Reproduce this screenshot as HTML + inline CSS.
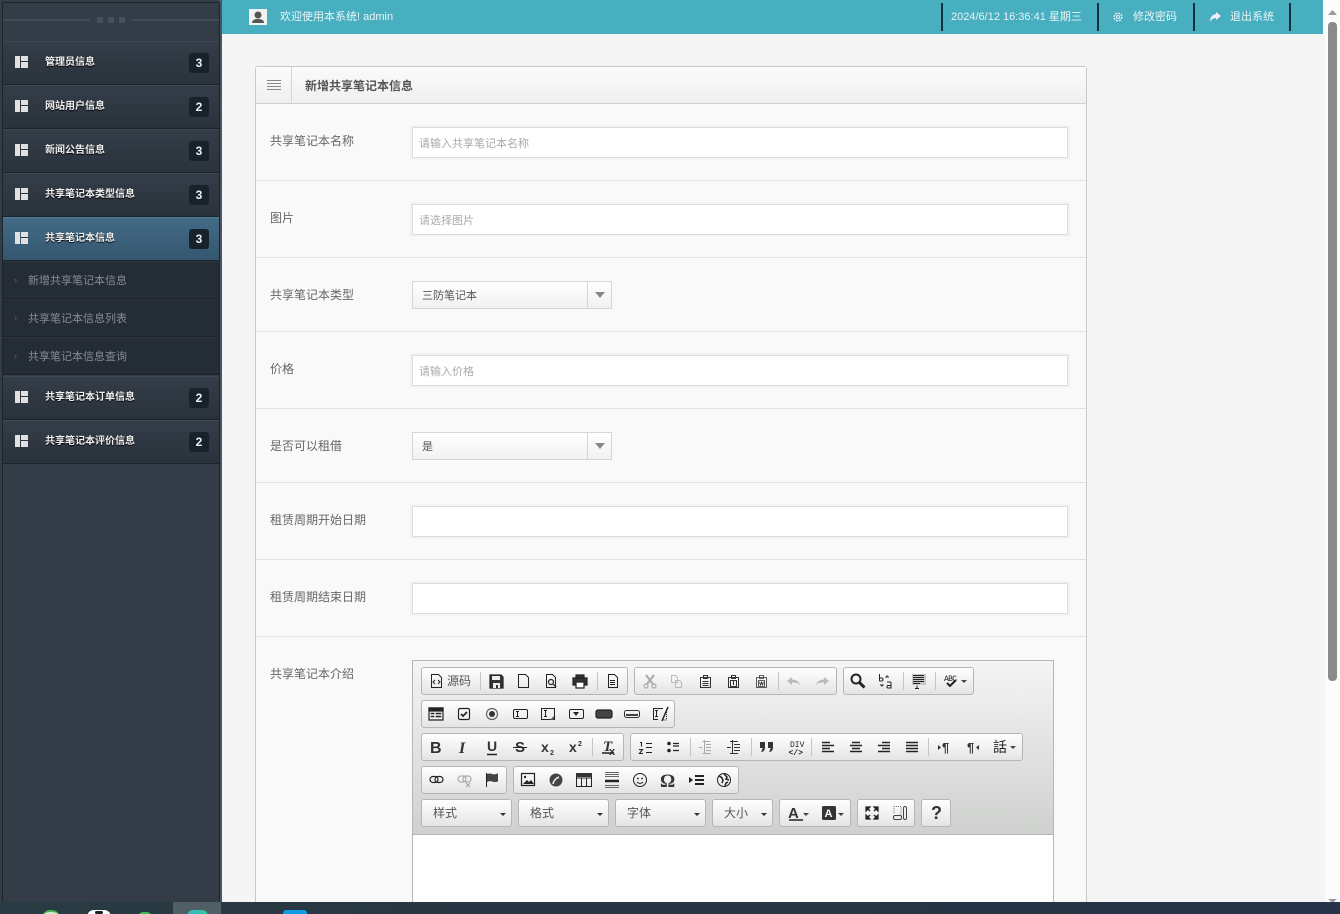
<!DOCTYPE html>
<html lang="zh-CN"><head><meta charset="utf-8"><title>新增共享笔记本信息</title>
<style>
html,body{margin:0;padding:0;width:1340px;height:914px;overflow:hidden;background:#f5f5f5;font-family:"Liberation Sans","Noto Sans CJK SC",sans-serif;font-size:12px;color:#555}
body{position:relative}
div,span{position:absolute;box-sizing:border-box;white-space:nowrap}
#side{left:0;top:0;width:222px;height:914px;background:#333c47;border-right:3px solid #4c555f}
#side .fr{left:2px;top:2px;width:218px;height:912px;border:1px solid #1c242c;border-width:1px 1px 0 1px}
.mi{left:3px;width:216px;height:44px;background:linear-gradient(#343d48,#2a323c);border-top:1px solid #3d4651;border-bottom:1px solid #1b232b}
.mi.on{background:linear-gradient(#426b87,#35566f);border-top:1px solid #547b96}
.mi b{position:absolute;left:42px;top:14px;line-height:14px;font-size:10px;color:#f0f0f0;text-shadow:0 1px 1px #000}
.ic{left:12px;top:14px;width:13px;height:12px;background:linear-gradient(90deg,#e0e0e0 0 5px,transparent 5px 6px,#e0e0e0 6px);}
.ic:after{content:"";position:absolute;left:6px;top:5px;width:7px;height:1px;background:#333}
.bd{left:186px;top:11px;width:20px;height:20px;border-radius:3px;background:#17222b;color:#eaf2f6;font-weight:bold;font-size:12px;text-align:center;line-height:21px;font-family:"Liberation Sans",sans-serif}
.sub{left:3px;width:216px;height:38px;background:#242c35;border-bottom:1px solid #1b2229;border-top:1px solid #2d353e;color:#858c92;font-size:11px;line-height:38px;padding-left:25px}
.sub:before{content:"›";position:absolute;left:11px;top:-1px;color:#666;font-size:9px}
#top{left:222px;top:0;width:1101px;height:34px;background:#47afc0;color:#eef;font-size:11px;line-height:34px}
#top span{color:#e8f5f7;top:0}
.bar{top:3px;height:28px;width:2px;background:#123040}
#card{left:255px;top:66px;width:832px;height:836px;background:#f9f9f9;border:1px solid #c9c9c9;border-bottom:0;border-radius:3px 3px 0 0}
#hd{left:0;top:0;width:830px;height:37px;background:linear-gradient(#fbfbfb,#efefef);border-bottom:1px solid #cfcfcf}
#hd b{position:absolute;left:49px;top:12px;line-height:15px;font-size:12px;color:#555}
.sep{left:0;width:830px;height:1px;background:#e2e2e2}
.lb{left:270px;line-height:16px;color:#666;font-size:12px}
.in{left:412px;width:656px;height:31px;background:#fff;border:1px solid #dcdcdc;box-shadow:0 0 0 2px #f3f3f3;color:#aaa;font-size:11px;line-height:32px;padding-left:6px}
.se{left:412px;width:200px;height:28px;background:linear-gradient(#fff,#f1f1f1);border:1px solid #d5d5d5;color:#555;font-size:11px;line-height:28px;padding-left:9px}
.se i{position:absolute;left:174px;top:0;width:24px;height:26px;border-left:1px solid #d5d5d5}
.se i:after{content:"";position:absolute;left:7px;top:10px;border:5px solid transparent;border-top:6px solid #888;border-bottom:0}
#ed{left:412px;top:660px;width:642px;height:242px;background:#fff;border:1px solid #b6b6b6;border-bottom:0}
#tb{left:0;top:0;width:640px;height:174px;background:linear-gradient(#f4f4f4,#cfd1cf);border-bottom:1px solid #b6b6b6}
.g{height:28px;background:linear-gradient(#fff,#e4e4e4);border:1px solid #b6b6b6;border-radius:3px}
.c{top:799px;color:#555;font-size:12px;line-height:26px;padding-left:11px}
.c:after{content:"";position:absolute;right:5px;top:13px;border:3px solid transparent;border-top:3px solid #333;border-bottom:0}
#sb{left:1325px;top:0;width:15px;height:914px;background:#fcfcfc}
#th{left:3px;top:22px;width:9px;height:659px;background:#8b8b8b;border-radius:4px}
#task{left:0;top:902px;width:1340px;height:12px;overflow:hidden;background:linear-gradient(90deg,#293a42,#283544 60%,#263349)}
svg{position:absolute;left:0;top:0}
</style></head><body>

<div id="card">
<div id="hd"><div style="left:0;top:0;width:36px;height:37px;border-right:1px solid #d5d5d5"></div><b>新增共享笔记本信息</b></div>
<div class="sep" style="top:113px"></div><div class="sep" style="top:190px"></div><div class="sep" style="top:264px"></div><div class="sep" style="top:341px"></div><div class="sep" style="top:415px"></div><div class="sep" style="top:492px"></div><div class="sep" style="top:569px"></div>
</div>

<div class="lb" style="top:133px">共享笔记本名称</div><div class="in" style="top:127px">请输入共享笔记本名称</div>
<div class="lb" style="top:210px">图片</div><div class="in" style="top:204px">请选择图片</div>
<div class="lb" style="top:287px">共享笔记本类型</div><div class="se" style="top:281px">三防笔记本<i></i></div>
<div class="lb" style="top:361px">价格</div><div class="in" style="top:355px">请输入价格</div>
<div class="lb" style="top:438px">是否可以租借</div><div class="se" style="top:432px">是<i></i></div>
<div class="lb" style="top:512px">租赁周期开始日期</div><div class="in" style="top:506px"></div>
<div class="lb" style="top:589px">租赁周期结束日期</div><div class="in" style="top:583px"></div>
<div class="lb" style="top:666px">共享笔记本介绍</div>

<div id="ed"><div id="tb"></div></div>
<div class="g" style="left:421px;top:667px;width:207px"></div><div class="g" style="left:634px;top:667px;width:203px"></div><div class="g" style="left:843px;top:667px;width:131px"></div>
<div class="g" style="left:421px;top:700px;width:254px"></div>
<div class="g" style="left:421px;top:733px;width:203px"></div><div class="g" style="left:630px;top:733px;width:393px"></div>
<div class="g" style="left:421px;top:766px;width:86px"></div><div class="g" style="left:513px;top:766px;width:226px"></div>
<div class="g c" style="left:421px;width:91px">样式</div><div class="g c" style="left:518px;width:91px">格式</div><div class="g c" style="left:615px;width:91px">字体</div><div class="g c" style="left:712px;width:61px">大小</div>
<div class="g" style="left:779px;top:799px;width:72px"></div><div class="g" style="left:857px;top:799px;width:58px"></div><div class="g" style="left:921px;top:799px;width:30px"></div>
<div style="left:447px;top:673px;line-height:16px;font-size:12px;color:#555">源码</div>

<svg width="1340" height="914" viewBox="0 0 1340 914" fill="none" stroke="#222" stroke-width="1.2">
<!-- header lines -->
<path d="M267 80.500h14M267 83.500h14M267 86.500h14M267 89.500h14" stroke="#888" stroke-width="1"/>
<!-- separators -->
<path d="M480.500 672v18M597.500 672v18M778.500 672v18M903.500 672v18M935.500 672v18M592.500 738v18M690.500 738v18M751.500 738v18M811.500 738v18M928.500 738v18" stroke="#c4c4c4" stroke-width="1"/>
<!-- row 1 -->
<path d="M431.500 674.500h7l3 3v10h-10zM435 680l-2 2 2 2M438 680l2 2-2 2" stroke-width="1"/>
<path d="M490 675h11l2 2v11h-13z" fill="#333"/><path d="M492 676h8v4h-8zM493 683h7v5h-7z" fill="#eee" stroke="none"/><path d="M496 685h2v3h-2z" fill="#333" stroke="none"/>
<path d="M518.500 674.500h7l3 3v10h-10z" stroke-width="1"/>
<path d="M546.500 674.500h6l3 3v10h-9z" stroke-width="1"/><circle cx="551" cy="682" r="2.500"/><path d="M553 684l3 3"/>
<path d="M576 675h8v3h-8zM573 678h14v7h-14z" fill="#333"/><path d="M576 682h8v6h-8z" fill="#fff"/>
<path d="M608.500 674.500h6l3 3v10h-9zM610 680.500h5M610 682.500h5M610 684.500h5" stroke-width="1"/>
<!-- group 2 disabled -->
<g stroke="#aaa"><path d="M646 675l7 9M654 675l-7 9" stroke-width="2"/><circle cx="646" cy="686" r="2"/><circle cx="654" cy="686" r="2"/>
<path d="M671.500 675.500h4l2 2v5h-6zM675.500 680.500h4l2 2v5h-6z" stroke="#bbb" stroke-width="1"/></g>
<g stroke="#333" stroke-width="1"><path d="M700.500 677.500h10v10h-10zM703.500 675.500h4v3h-4zM702.500 681.500h6M702.500 683.500h6M702.500 685.500h6"/>
<path d="M728.500 677.500h10v10h-10zM731.500 675.500h4v3h-4zM730.500 680.500h6v6h-6zM733.500 681v4"/>
<path d="M756.500 677.500h10v10h-10zM759.500 675.500h4v3h-4zM758.500 680.500h6v6h-6zM759.500 682l1 3 1-3 1 3 1-3" stroke-width=".8"/></g>
<path d="M787 681l5-4v2.500c4 0 7 2 8 5.500-2-2-4-2.500-8-2.500v2.500zM829 681l-5-4v2.500c-4 0-7 2-8 5.500 2-2 4-2.500 8-2.500v2.500z" fill="#bbb" stroke="none"/>
<!-- group 3 -->
<circle cx="856" cy="679" r="4.500" stroke="#222" stroke-width="2"/><path d="M859.500 682.500l5 5" stroke-width="3"/>
<path d="M879.500 674v7M879.500 678h2q1.500 0 1.500 1.500t-1.500 1.500h-2M889 677h-3l1.500-1.500M880 685h3l-1.500 1.500M887 682h3q1 0 1 1v5h-3q-1 0-1-1.200t1-1.300h3" stroke-width="1"/>
<path d="M912 674h14v11h-14z" fill="#c8c8c8" stroke="none"/><path d="M913 675.500h11M913 677.500h11M913 679.500h11M913 681.500h11M913 683.500h7M917 685.500v3M915 688.500h4" stroke-width="1"/>
<text x="944" y="681" font-size="8" font-family="Liberation Mono" fill="#222" stroke="none" textLength="13">ABC</text><path d="M947 683l3 3 6-6" stroke-width="2"/><path d="M961 680h6l-3 3z" fill="#444" stroke="none"/>
<!-- row 2 -->
<path d="M429 708h14v12h-14z"/><path d="M429 708h14v3h-14z" fill="#222"/><path d="M431 713h3v1h-3zM431 716h3v1h-3zM436 713h5v1h-5zM436 716h5v1h-5z" fill="#222" stroke-width=".6"/>
<rect x="458.500" y="708.500" width="11" height="11" rx="1.500"/><path d="M461 714l2 2 4-4" stroke-width="1.700"/>
<circle cx="492" cy="714" r="5.500" stroke="#666"/><circle cx="492" cy="714" r="3" fill="#333" stroke="none"/>
<rect x="513.500" y="709.500" width="14" height="9" rx="1.500" stroke-width="1"/><path d="M516 711.500h3M517.500 711.500v5M516 716.500h3" stroke-width="1"/>
<path d="M541.500 708.500h13v11h-13z" stroke-width="1"/><path d="M544 710.500h3M545.500 710.500v6M544 716.500h3" stroke-width="1"/><path d="M554 716l-4 4h4z" fill="#555" stroke="none"/>
<rect x="569.500" y="709.500" width="14" height="9" rx="1.500" stroke-width="1"/><path d="M573 712h6l-3 4z" fill="#222" stroke="none"/>
<rect x="596" y="710" width="16" height="8" rx="2" fill="#444" stroke="#222"/>
<rect x="624.500" y="710.500" width="15" height="7" rx="2" stroke="#333" stroke-width="1"/><path d="M626 715h12" stroke="#444" stroke-width="2"/>
<path d="M653 708.500h10M653 719.500h5M653.500 708.500v11M655 710.500h3M656.500 710.500v6M655 716.500h3" stroke-width="1"/><path d="M668 707l-6 14" stroke-width="1.500"/><path d="M666.500 712v8h-3" stroke-dasharray="1 1" stroke-width="1"/>
<!-- row 3 -->
<g font-family="Liberation Sans" fill="#333" stroke="none">
<text x="430" y="753" font-size="16" font-weight="bold">B</text>
<text x="459" y="753" font-size="16" font-weight="bold" font-style="italic" font-family="Liberation Serif">I</text>
<text x="487" y="751" font-size="14" font-weight="bold">U</text>
<text x="515" y="752" font-size="15" font-weight="bold">S</text>
<text x="541" y="752" font-size="14" font-weight="bold">x</text><text x="550" y="755" font-size="7" font-weight="bold">2</text>
<text x="569" y="752" font-size="14" font-weight="bold">x</text><text x="578" y="746" font-size="7" font-weight="bold">2</text>
<text x="603" y="751" font-size="15" font-weight="bold" font-style="italic" font-family="Liberation Serif">T</text><text x="609" y="755" font-size="11" font-weight="bold">x</text>
<text x="790" y="747" font-size="8" font-family="Liberation Mono" fill="#222">DIV</text><text x="788.500" y="755" font-size="8" font-weight="bold" font-family="Liberation Mono" fill="#222">&lt;/&gt;</text>
<text x="942" y="752" font-size="13" font-weight="bold" fill="#333">¶</text><text x="967" y="752" font-size="13" font-weight="bold" fill="#333">¶</text>
<text x="993" y="752" font-size="14" fill="#222" font-family="'Noto Sans CJK SC'">話</text>
<text x="660" y="787" font-size="19" font-weight="bold" font-family="Liberation Serif">Ω</text>
<text x="931" y="819" font-size="18" font-weight="bold">?</text>
<text x="788" y="818" font-size="15" font-weight="bold">A</text>
</g>
<path d="M760 742h5v5q0 4-3 5l-1-1q1.500-1 1.500-3h-2.500zM768 742h5v5q0 4-3 5l-1-1q1.500-1 1.500-3h-2.500z" fill="#333" stroke="none"/>
<path d="M487 754.500h10" stroke-width="1.500"/><path d="M513 747.500h14" stroke-width="1"/><path d="M602 753h12" stroke-width="1.500"/>
<path d="M640 742.500h1.500v4M639 749.500h3.500l-3 4h3.500M646 743.500h6M646 747.500h6M646 752.500h6" stroke-width="1.100"/>
<circle cx="669" cy="743.500" r="1.800" fill="#222" stroke="none"/><circle cx="669" cy="750.500" r="1.800" fill="#222" stroke="none"/><path d="M673 743.500h6M673 750.500h6M673 746h6" stroke-width="1.300"/>
<path d="M702.500 741.500h8M706 744.500h5M706 747.500h5M706 750.500h5M702.500 753.500h8M699 747.500h3M704.500 740v14" stroke="#aaa" stroke-width="1"/>
<path d="M730 741.500h8M734 744.500h6M734 747.500h6M734 750.500h6M730 753.500h8M727 747.500h4M732.500 740v14" stroke="#333" stroke-width="1"/>
<path d="M822 742.500h8M822 745.500h12M822 748.500h8M822 751.500h12" stroke-width="1.500"/>
<path d="M852 742.500h8M850 745.500h12M852 748.500h8M850 751.500h12" stroke-width="1.500"/>
<path d="M882 742.500h8M878 745.500h12M882 748.500h8M878 751.500h12" stroke-width="1.500"/>
<path d="M906 742.500h12M906 745.500h12M906 748.500h12M906 751.500h12" stroke-width="1.500"/>
<path d="M938 745l3 2.500-3 2.500zM979 745l-3 2.500 3 2.500z" fill="#333" stroke="none"/>
<path d="M1010 746h6l-3 3z" fill="#444" stroke="none"/>
<!-- row 4 -->
<rect x="430" y="776.500" width="8" height="6" rx="3" stroke-width="1.200"/><rect x="435" y="776.500" width="8" height="6" rx="3" stroke-width="1.200"/>
<g stroke="#aaa"><rect x="458" y="776" width="8" height="6" rx="3" stroke-width="1.200"/><rect x="463" y="776" width="8" height="6" rx="3" stroke-width="1.200"/><path d="M466 783l4 4M470 783l-4 4"/></g>
<path d="M486.500 773v14" stroke-width="1"/><path d="M487 774q3-1 5 0t6-.5v8q-3 1-6 0t-5 .5z" fill="#444" stroke="none"/>
<path d="M521.500 773.500h13v12h-13z"/><path d="M523 784l4-4 2 2 2-2 3 4z" fill="#222" stroke="none"/><circle cx="525" cy="777" r="1.200" fill="#222" stroke="none"/>
<circle cx="556" cy="780" r="6.500" fill="#444" stroke="none"/><path d="M553 784q1-5 6-7" stroke="#eee" stroke-width="1.500"/>
<path d="M576.500 773.500h15v13h-15zM576.500 778h15M581.500 778v8M586.500 778v8" stroke-width="1"/><path d="M576 773h16v4h-16z" fill="#333" stroke="none"/>
<path d="M605 772.500h14M605 774.500h14M605 776.500h14M605 785.500h14M605 787.500h14" stroke="#666" stroke-width="1"/><path d="M605 781h14" stroke-width="2.500"/>
<circle cx="640" cy="780" r="6.500" stroke-width="1"/><circle cx="638" cy="778.500" r=".9" fill="#222" stroke="none"/><circle cx="642" cy="778.500" r=".9" fill="#222" stroke="none"/><path d="M637 782q3 3 6 0" stroke-width="1"/>
<path d="M689 777l4 3-4 3z" fill="#222" stroke="none"/><path d="M695 776h9M695 780h9M695 784h9" stroke-width="2"/>
<circle cx="724" cy="780" r="6.500" stroke-width="1"/><path d="M719 776q3 1 4 4l-1 3M724 774l3 3-1 2 3 1M725 786l1-3 2-1" stroke-width="1.500"/>
<!-- row 5 -->
<path d="M789 820h14" stroke="#555" stroke-width="2"/><path d="M803 813h6l-3 3z" fill="#444" stroke="none"/>
<rect x="822" y="806" width="14" height="14" rx="1.500" fill="#333" stroke="none"/><text x="824.500" y="817" font-size="11" font-weight="bold" font-family="Liberation Sans" fill="#fff" stroke="none">A</text><path d="M838 813h6l-3 3z" fill="#444" stroke="none"/>
<path d="M866 807h4l-4 4zM878 807h-4l4 4zM866 819h4l-4-4zM878 819h-4l4-4z" fill="#222" stroke="#222"/><path d="M868 809l2 2M876 809l-2 2M868 817l2-2M876 817l-2-2" stroke-width="1.500"/>
<path d="M894 806.500h7v8" stroke="#777" stroke-dasharray="1 1" stroke-width="1"/><path d="M894 806v8" stroke="#777" stroke-dasharray="1 1" stroke-width="1"/><rect x="893.500" y="815.500" width="8" height="4" rx="1.500" stroke="#444" stroke-width="1"/><rect x="903.500" y="806.500" width="3" height="13" rx="1.500" stroke="#444" stroke-width="1"/>
</svg>

<div id="side"><div class="fr"></div>
<div style="left:3px;top:19px;width:87px;height:2px;background:#414a54"></div><div style="left:131px;top:19px;width:88px;height:2px;background:#414a54"></div>
<div style="left:97px;top:17px;width:6px;height:6px;background:#48515b"></div><div style="left:108px;top:17px;width:6px;height:6px;background:#48515b"></div><div style="left:119px;top:17px;width:6px;height:6px;background:#48515b"></div>
<div class="mi" style="top:41px"><i class="ic" style="position:absolute"></i><b>管理员信息</b><span class="bd">3</span></div>
<div class="mi" style="top:85px"><i class="ic" style="position:absolute"></i><b>网站用户信息</b><span class="bd">2</span></div>
<div class="mi" style="top:129px"><i class="ic" style="position:absolute"></i><b>新闻公告信息</b><span class="bd">3</span></div>
<div class="mi" style="top:173px"><i class="ic" style="position:absolute"></i><b>共享笔记本类型信息</b><span class="bd">3</span></div>
<div class="mi on" style="top:217px"><i class="ic" style="position:absolute"></i><b>共享笔记本信息</b><span class="bd">3</span></div>
<div class="sub" style="top:261px">新增共享笔记本信息</div>
<div class="sub" style="top:299px">共享笔记本信息列表</div>
<div class="sub" style="top:337px">共享笔记本信息查询</div>
<div class="mi" style="top:376px"><i class="ic" style="position:absolute"></i><b>共享笔记本订单信息</b><span class="bd">2</span></div>
<div class="mi" style="top:420px"><i class="ic" style="position:absolute"></i><b>共享笔记本评价信息</b><span class="bd">2</span></div>
</div>

<div id="top">
<div style="left:27px;top:9px;width:18px;height:16px;background:#f2f2f2"></div>
<svg width="18" height="16" style="left:27px;top:9px"><circle cx="9" cy="6" r="3.500" fill="#555"/><path d="M3 14q0-4 6-4t6 4z" fill="#555"/></svg>
<span style="left:58px">欢迎使用本系统! admin</span>
<div class="bar" style="left:719px"></div><span style="left:729px">2024/6/12 16:36:41 星期三</span>
<div class="bar" style="left:875px"></div>
<svg width="12" height="12" style="left:890px;top:11px" fill="none" stroke="#eef"><circle cx="6" cy="6" r="3.800" stroke-width="1.500" stroke-dasharray="2 1"/><circle cx="6" cy="6" r="1.500"/></svg>
<span style="left:911px">修改密码</span>
<div class="bar" style="left:971px"></div>
<svg width="14" height="12" style="left:986px;top:11px"><path d="M8 1l5 4-5 4V7q-4 0-6 4Q2 4 8 3z" fill="#eef"/></svg>
<span style="left:1008px">退出系统</span>
<div class="bar" style="left:1067px"></div>
</div>

<div style="left:1323px;top:0;width:2px;height:34px;background:#fff"></div>
<div id="sb"><div id="th"></div>
<svg width="15" height="20" style="left:0;top:0"><path d="M3 15l4.500-5 4.500 5z" fill="#999"/></svg>
<svg width="15" height="6" style="left:0;top:898px"><path d="M3 1l4.500 4 4.500-4z" fill="#999"/></svg></div>

<div id="task">
<div style="left:173px;top:0;width:48px;height:12px;background:#505f66"></div>
<div style="left:42px;top:8px;width:18px;height:10px;border-radius:8px 8px 0 0;background:#d8e8d0;border-top:2px solid #4caf50"></div>
<div style="left:87px;top:8px;width:24px;height:12px;border-radius:7px 7px 0 0;background:#fff"></div>
<div style="left:95px;top:9px;width:8px;height:3px;border-radius:4px;background:#222"></div>
<div style="left:138px;top:10px;width:14px;height:10px;border-radius:7px;background:#3fb950"></div>
<div style="left:187px;top:8px;width:21px;height:12px;border-radius:10px;background:linear-gradient(90deg,#2fb6c6,#39c59a)"></div>
<div style="left:283px;top:8px;width:24px;height:12px;border-radius:3px 3px 0 0;background:#0f9be3"></div>
</div>
</body></html>
